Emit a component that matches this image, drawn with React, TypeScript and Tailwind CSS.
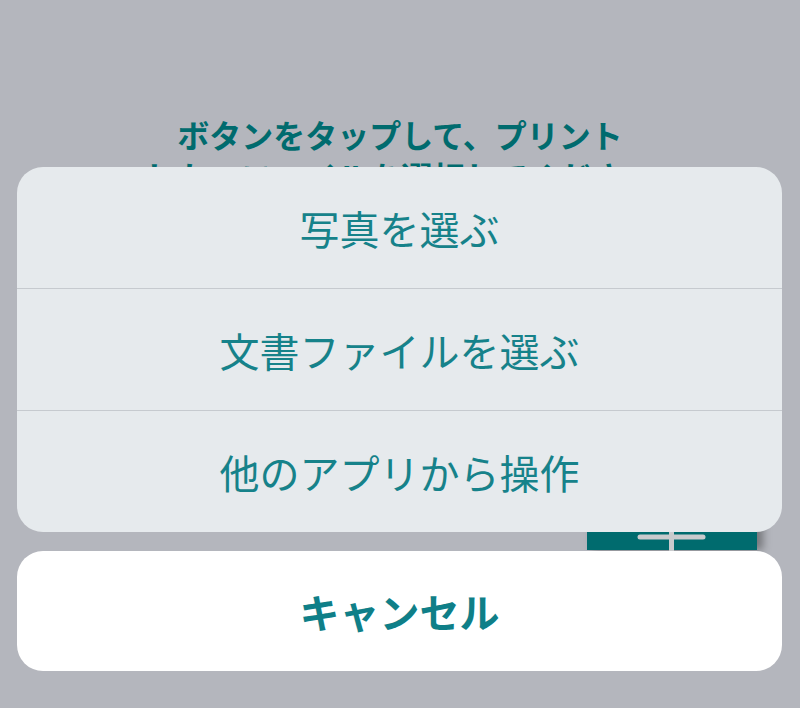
import React from "react";

const font = { fontFamily: '"Noto Sans CJK JP", "Noto Sans", sans-serif' };

export default function App() {
  return (
    <div className="relative h-[708px] w-[800px] overflow-hidden bg-[#b4b6bd]" style={font}>
      {/* background page */}
      <div className="flex flex-col items-center pt-[113px] text-[32px] font-bold leading-[42px] text-[#006b6e]">
        <div>ボタンをタップして、プリント</div>
        <div>したいファイルを選択してください</div>
      </div>
      {/* floating button behind sheet */}
      <div className="absolute left-[587px] top-[470px] flex h-[80px] w-[170px] items-end justify-center bg-[#006b6e] pb-[4px] shadow-[6px_0_8px_rgba(0,0,0,0.35)]">
        <svg width="70" height="70" viewBox="0 0 70 70" className="mb-[-26px]">
          <line x1="3" y1="35" x2="66" y2="35" stroke="#c9cbcd" strokeWidth="5" strokeLinecap="round" />
          <line x1="34.5" y1="2" x2="34.5" y2="68" stroke="#c9cbcd" strokeWidth="5" strokeLinecap="round" />
        </svg>
      </div>
      {/* action sheet overlay */}
      <div className="absolute inset-0 flex flex-col justify-end pb-[37px] pl-[17px] pr-[18px]">
        <div className="flex flex-col overflow-hidden rounded-[26px] bg-[#e6eaed] text-[40px] text-[#16828a]">
          <div className="flex h-[121px] items-center justify-center">写真を選ぶ</div>
          <div className="h-px bg-[#c6cacf]" />
          <div className="flex h-[121px] items-center justify-center">文書ファイルを選ぶ</div>
          <div className="h-px bg-[#c6cacf]" />
          <div className="flex h-[121px] items-center justify-center">他のアプリから操作</div>
        </div>
        <div className="mt-[19px] flex h-[120px] items-center justify-center rounded-[26px] bg-white text-[40px] font-bold text-[#0f7f88]">
          キャンセル
        </div>
      </div>
    </div>
  );
}
